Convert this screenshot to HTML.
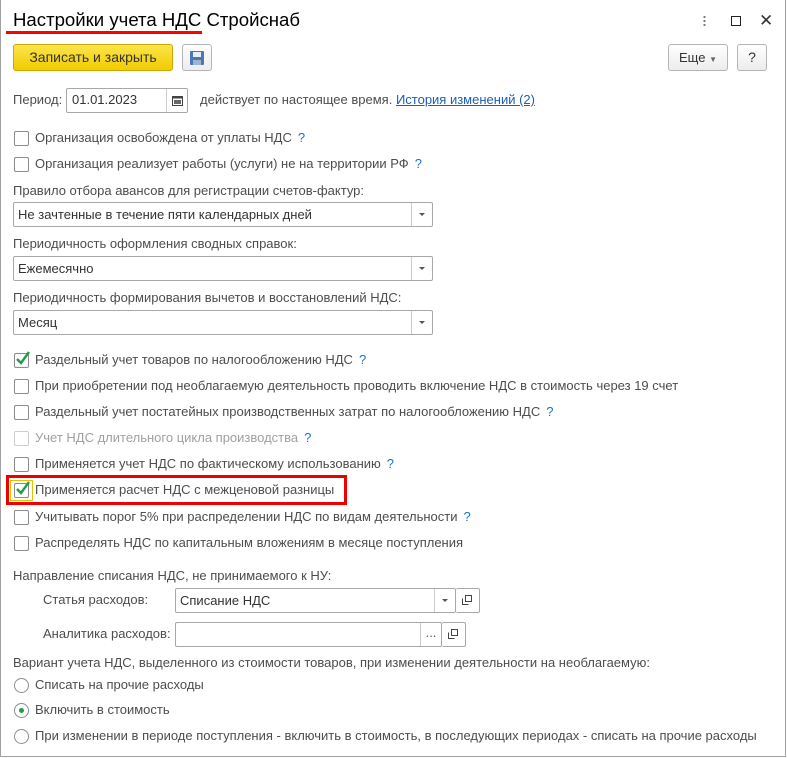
<!DOCTYPE html>
<html><head><meta charset="utf-8">
<style>
*{box-sizing:border-box;margin:0;padding:0}
body{width:787px;height:758px;background:#fff;font-family:"Liberation Sans",Arial,sans-serif;font-size:13px;color:#4d4d4d;position:relative;overflow:hidden}
.frame{position:absolute;left:0;top:0;width:786px;height:757px;border:1px solid #a0a0a0;border-top:none}
.a{position:absolute;white-space:nowrap}
.t{position:absolute;white-space:nowrap;line-height:16px}
.cb{position:absolute;width:15px;height:15px;border:1px solid #8c8c8c;border-radius:2px;background:#fff}
.cb.dis{border-color:#ccc}
.q{color:#1a73c8;margin-left:6px}
.inp{position:absolute;border:1px solid #a8a8a8;border-radius:2px;background:#fff;height:25px}
.btn{position:absolute;border:1px solid #b5b5b5;border-radius:3px;background:linear-gradient(#fff,#ececec);height:27px}
.rad{position:absolute;width:15px;height:15px;border:1px solid #8c8c8c;border-radius:50%;background:#fff}
.dd{position:absolute;top:0;right:0;width:21px;height:23px;border-left:1px solid #ccc}
.dd:after{content:"";position:absolute;left:7px;top:10px;border-left:3px solid transparent;border-right:3px solid transparent;border-top:3px solid #555}
</style></head><body>
<div class="frame"></div>
<div class="a" style="left:13px;top:9px;font-size:18.6px;color:#000;line-height:22px">Настройки учета НДС Стройснаб</div>
<div class="a" style="left:6px;top:31px;width:196px;height:3px;background:#f00"></div>
<div class="a" style="left:703px;top:15px;width:3px;height:12px;background:radial-gradient(circle,#777 1px,transparent 1.3px) 0 0/3px 4px"></div>
<div class="a" style="left:731px;top:16px;width:10px;height:10px;border:1.5px solid #222"></div>
<div class="a" style="left:759px;top:11px;font-size:17px;color:#333;line-height:20px">✕</div>

<div class="btn" style="left:13px;top:44px;width:160px;background:linear-gradient(#fbe54a,#f1cc00);border-color:#c9a800;color:#333;font-size:14px;text-align:center;line-height:25px">Записать и закрыть</div>
<div class="btn" style="left:182px;top:44px;width:30px">
<svg width="16" height="16" style="position:absolute;left:6px;top:5px" viewBox="0 0 16 16"><rect x="1" y="1" width="14" height="14" rx="1" fill="#4a78b5"/><rect x="4" y="2" width="8" height="5" fill="#e8eef6"/><rect x="4" y="10" width="8" height="5" fill="#9fb3cc"/></svg></div>
<div class="btn" style="left:668px;top:44px;width:60px;text-align:center;line-height:25px;color:#333">Еще <span style="font-size:8px;color:#666">▼</span></div>
<div class="btn" style="left:737px;top:44px;width:30px;text-align:center;line-height:25px;color:#333;font-size:14px">?</div>

<div class="t" style="left:13px;top:92px">Период:</div>
<div class="inp" style="left:66px;top:88px;width:122px"><span class="t" style="left:5px;top:3px;color:#333">01.01.2023</span>
<div style="position:absolute;right:0;top:0;width:21px;height:23px;border-left:1px solid #ccc"><svg width="11" height="11" style="position:absolute;left:5px;top:6px" viewBox="0 0 11 11"><rect x="0.5" y="1.5" width="10" height="9" fill="none" stroke="#444"/><rect x="0.5" y="1.5" width="10" height="2" fill="#444"/><rect x="2" y="5" width="7" height="4" fill="#666"/></svg></div></div>
<div class="t" style="left:200px;top:92px">действует по настоящее время. <span style="color:#1a5fb4;text-decoration:underline">История изменений (2)</span></div>

<div class="cb" style="left:14px;top:131px"></div><div class="t" style="left:35px;top:130px">Организация освобождена от уплаты НДС<span class="q">?</span></div>
<div class="cb" style="left:14px;top:157px"></div><div class="t" style="left:35px;top:156px">Организация реализует работы (услуги) не на территории РФ<span class="q">?</span></div>

<div class="t" style="left:13px;top:183px">Правило отбора авансов для регистрации счетов-фактур:</div>
<div class="inp" style="left:13px;top:202px;width:420px"><span class="t" style="left:4px;top:4px;color:#333">Не зачтенные в течение пяти календарных дней</span><div class="dd"></div></div>
<div class="t" style="left:13px;top:236px">Периодичность оформления сводных справок:</div>
<div class="inp" style="left:13px;top:256px;width:420px"><span class="t" style="left:4px;top:4px;color:#333">Ежемесячно</span><div class="dd"></div></div>
<div class="t" style="left:13px;top:290px">Периодичность формирования вычетов и восстановлений НДС:</div>
<div class="inp" style="left:13px;top:310px;width:420px"><span class="t" style="left:4px;top:4px;color:#333">Месяц</span><div class="dd"></div></div>

<div class="cb" style="left:14px;top:353px"><svg width="15" height="15" style="position:absolute;left:0;top:-3px" viewBox="0 0 15 15"><path d="M2 8l4 4 8-11" fill="none" stroke="#1e9e4a" stroke-width="2.4"/></svg></div><div class="t" style="left:35px;top:352px">Раздельный учет товаров по налогообложению НДС<span class="q">?</span></div>
<div class="cb" style="left:14px;top:379px"></div><div class="t" style="left:35px;top:378px">При приобретении под необлагаемую деятельность проводить включение НДС в стоимость через 19 счет</div>
<div class="cb" style="left:14px;top:405px"></div><div class="t" style="left:35px;top:404px">Раздельный учет постатейных производственных затрат по налогообложению НДС<span class="q">?</span></div>
<div class="cb dis" style="left:14px;top:431px"></div><div class="t" style="left:35px;top:430px;color:#a0a0a0">Учет НДС длительного цикла производства<span class="q">?</span></div>
<div class="cb" style="left:14px;top:457px"></div><div class="t" style="left:35px;top:456px">Применяется учет НДС по фактическому использованию<span class="q">?</span></div>
<div class="a" style="left:6px;top:475px;width:341px;height:30px;border:3px solid #e00"></div>
<div class="a" style="left:10px;top:480px;width:23px;height:21px;border:1px solid #e8c100"></div>
<div class="cb" style="left:14px;top:483px"><svg width="15" height="15" style="position:absolute;left:0;top:-3px" viewBox="0 0 15 15"><path d="M2 8l4 4 8-11" fill="none" stroke="#1e9e4a" stroke-width="2.4"/></svg></div><div class="t" style="left:35px;top:482px">Применяется расчет НДС с межценовой разницы</div>
<div class="cb" style="left:14px;top:510px"></div><div class="t" style="left:35px;top:509px">Учитывать порог 5% при распределении НДС по видам деятельности<span class="q">?</span></div>
<div class="cb" style="left:14px;top:536px"></div><div class="t" style="left:35px;top:535px">Распределять НДС по капитальным вложениям в месяце поступления</div>

<div class="t" style="left:13px;top:568px">Направление списания НДС, не принимаемого к НУ:</div>
<div class="t" style="left:43px;top:592px">Статья расходов:</div>
<div class="inp" style="left:175px;top:588px;width:281px"><span class="t" style="left:4px;top:4px;color:#333">Списание НДС</span><div class="dd"></div></div>
<div class="inp" style="left:456px;top:588px;width:24px;border-left:none"><svg width="10" height="10" style="position:absolute;left:6px;top:6px" viewBox="0 0 10 10"><rect x="3.5" y="0.5" width="6" height="6" fill="none" stroke="#444"/><path d="M0.5 3.5v6h6" fill="none" stroke="#444"/></svg></div>
<div class="t" style="left:43px;top:626px">Аналитика расходов:</div>
<div class="inp" style="left:175px;top:622px;width:267px"><div style="position:absolute;right:0;top:0;width:21px;height:23px;border-left:1px solid #ccc;text-align:center;line-height:20px;color:#555">...</div></div>
<div class="inp" style="left:442px;top:622px;width:24px;border-left:none"><svg width="10" height="10" style="position:absolute;left:6px;top:6px" viewBox="0 0 10 10"><rect x="3.5" y="0.5" width="6" height="6" fill="none" stroke="#444"/><path d="M0.5 3.5v6h6" fill="none" stroke="#444"/></svg></div>

<div class="t" style="left:13px;top:655px">Вариант учета НДС, выделенного из стоимости товаров, при изменении деятельности на необлагаемую:</div>
<div class="rad" style="left:14px;top:678px"></div><div class="t" style="left:35px;top:677px">Списать на прочие расходы</div>
<div class="rad" style="left:14px;top:703px"><div style="position:absolute;left:4px;top:4px;width:5px;height:5px;border-radius:50%;background:#1e9e4a"></div></div><div class="t" style="left:35px;top:702px">Включить в стоимость</div>
<div class="rad" style="left:14px;top:729px"></div><div class="t" style="left:35px;top:728px">При изменении в периоде поступления - включить в стоимость, в последующих периодах - списать на прочие расходы</div>
</body></html>
